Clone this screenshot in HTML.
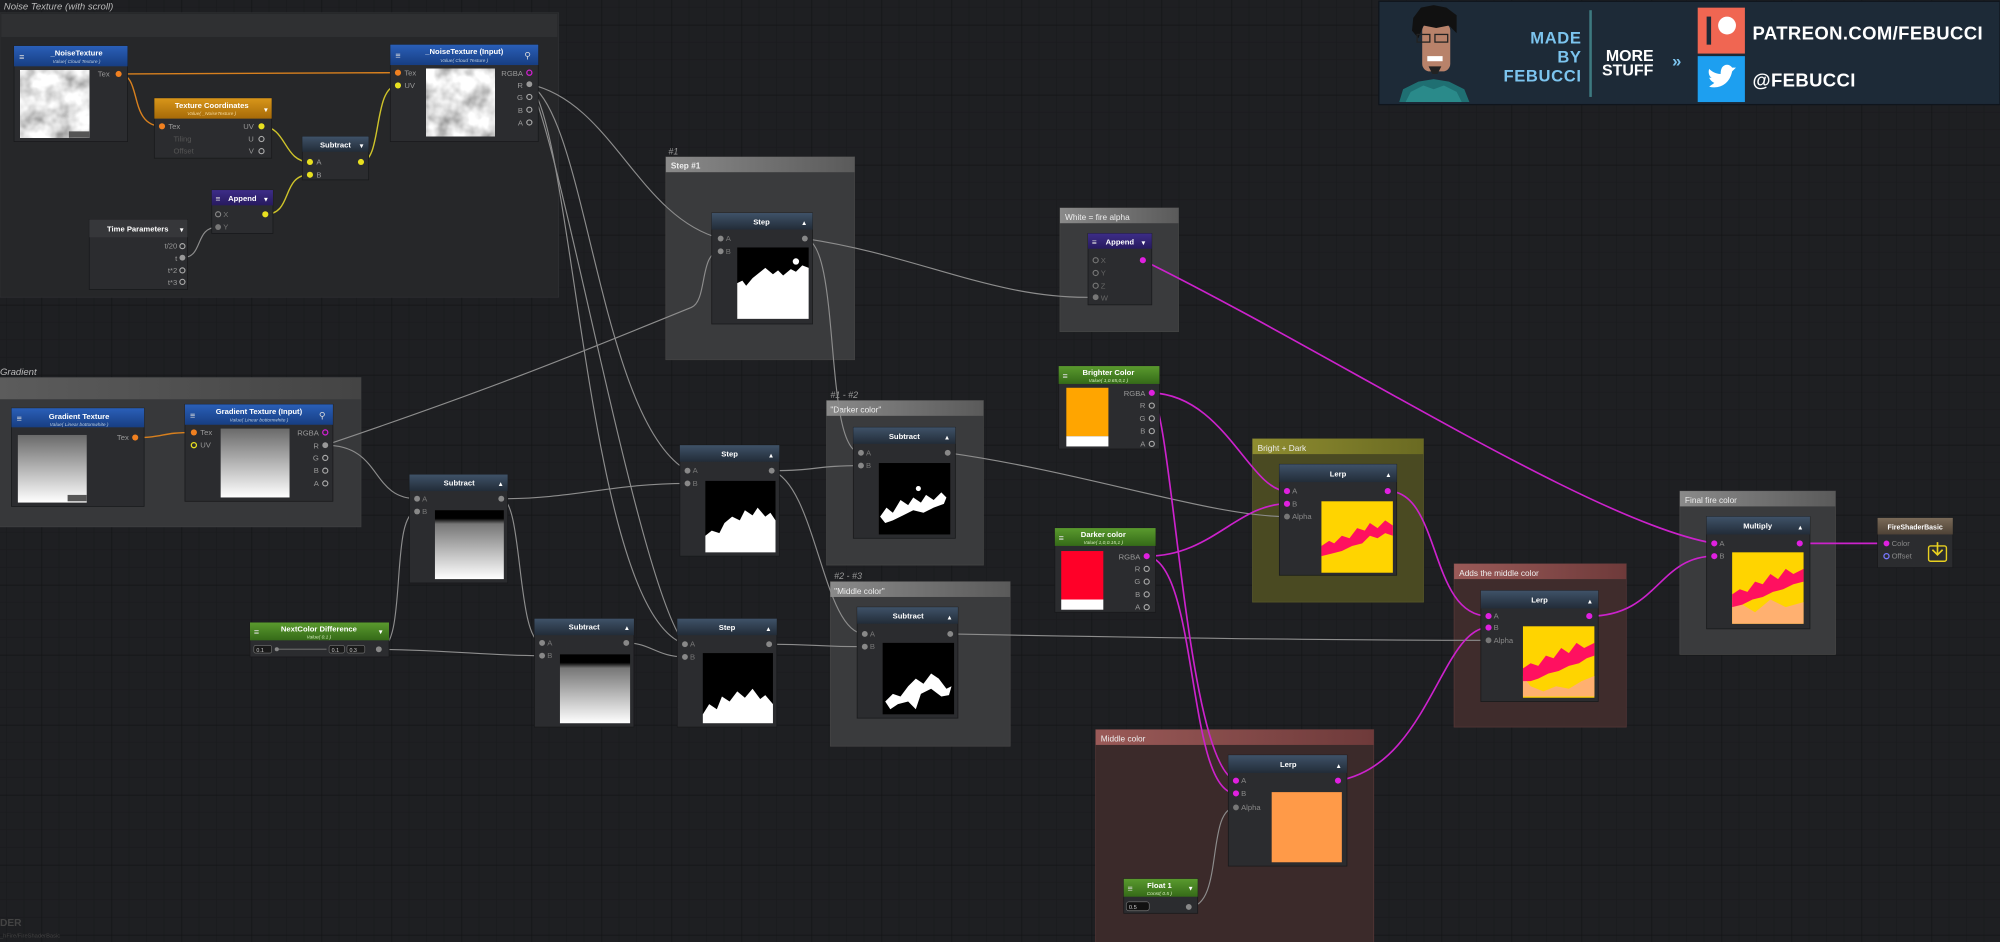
<!DOCTYPE html>
<html><head><meta charset="utf-8"><style>
html,body{margin:0;padding:0;background:#1d1e21;overflow:hidden}
svg{display:block}
text{font-family:"Liberation Sans","DejaVu Sans",sans-serif}
</style></head><body>
<svg width="2000" height="942" viewBox="0 0 1568 738.5" preserveAspectRatio="none" xmlns="http://www.w3.org/2000/svg">
<defs>
<pattern id="grid" x="32.5" y="19.4" width="54.88" height="54.88" patternUnits="userSpaceOnUse">
<rect width="54.88" height="54.88" fill="#1e1f22"/>
<path d="M13.72 0V54.88M27.44 0V54.88M41.16 0V54.88M0 13.72H54.88M0 27.44H54.88M0 41.16H54.88" stroke="#1a1b1d" stroke-width=".6"/>
<path d="M0 0V54.88M0 0H54.88" stroke="#131416" stroke-width="1.1"/>
</pattern>
<linearGradient id="hBlue" x1="0" y1="0" x2="0" y2="1"><stop offset="0" stop-color="#2a5fb8"/><stop offset="1" stop-color="#173e82"/></linearGradient>
<linearGradient id="hOrange" x1="0" y1="0" x2="0" y2="1"><stop offset="0" stop-color="#d8961a"/><stop offset="1" stop-color="#a66a08"/></linearGradient>
<linearGradient id="hOp" x1="0" y1="0" x2="0" y2="1"><stop offset="0" stop-color="#3f5268"/><stop offset="1" stop-color="#222c38"/></linearGradient>
<linearGradient id="hPurple" x1="0" y1="0" x2="0" y2="1"><stop offset="0" stop-color="#3d2d88"/><stop offset="1" stop-color="#271a5e"/></linearGradient>
<linearGradient id="hGreen" x1="0" y1="0" x2="0" y2="1"><stop offset="0" stop-color="#5a9a2e"/><stop offset="1" stop-color="#356a18"/></linearGradient>
<linearGradient id="hBrown" x1="0" y1="0" x2="0" y2="1"><stop offset="0" stop-color="#7a6a58"/><stop offset="1" stop-color="#4e4236"/></linearGradient>
<linearGradient id="gGray" x1="0" y1="0" x2="1" y2="0"><stop offset="0" stop-color="#8a8a8a"/><stop offset="1" stop-color="#5a5a5a"/></linearGradient>
<linearGradient id="gOlive" x1="0" y1="0" x2="1" y2="0"><stop offset="0" stop-color="#8f8d30"/><stop offset="1" stop-color="#6a6a22"/></linearGradient>
<linearGradient id="gRed" x1="0" y1="0" x2="1" y2="0"><stop offset="0" stop-color="#9a5a58"/><stop offset="1" stop-color="#6e3a3a"/></linearGradient>
<linearGradient id="gDark" x1="0" y1="0" x2="1" y2="0"><stop offset="0" stop-color="#5c5c5c"/><stop offset="1" stop-color="#444"/></linearGradient>
<linearGradient id="grad" x1="0" y1="0" x2="0" y2="1"><stop offset="0" stop-color="#6a6a6a"/><stop offset="1" stop-color="#ffffff"/></linearGradient>
<linearGradient id="grad2" x1="0" y1="0" x2="0" y2="1"><stop offset="0" stop-color="#000"/><stop offset=".12" stop-color="#000"/><stop offset=".2" stop-color="#777"/><stop offset="1" stop-color="#fff"/></linearGradient>
<filter id="noise" x="0" y="0" width="100%" height="100%">
<feTurbulence type="fractalNoise" baseFrequency="0.07" numOctaves="3" seed="4"/>
<feColorMatrix type="matrix" values="1.3 0 0 0 0.12  1.3 0 0 0 0.12  1.3 0 0 0 0.12  0 0 0 0 1"/>
</filter>
</defs>

<rect width="1568" height="740" fill="url(#grid)"/>

<!-- Noise group -->
<text x="3" y="7.5" font-size="7.5" font-style="italic" fill="#bbb">Noise Texture (with scroll)</text>
<rect x="0" y="10" width="438" height="223" fill="#262729" stroke="#2f3033" stroke-width=".6"/>
<rect x="1" y="11" width="436" height="18" fill="#2f3032"/>

<!-- Gradient group -->
<text x="0" y="294" font-size="7.5" font-style="italic" fill="#bbb">Gradient</text>
<rect x="-2" y="296" width="285" height="117" fill="#37383a" stroke="#3f4042" stroke-width=".6"/>
<rect x="-2" y="296" width="285" height="17" fill="url(#gDark)"/>

<!-- Step #1 group -->
<text x="524" y="121" font-size="7" font-style="italic" fill="#999">#1</text>
<rect x="522" y="123" width="148" height="159" fill="#3a3b3d" stroke="#444" stroke-width=".6"/>
<rect x="522" y="123" width="148" height="12" fill="url(#gGray)"/>
<text x="526" y="132" font-size="6.5" font-weight="bold" fill="#eee">Step #1</text>

<!-- #1-#2 -->
<text x="651" y="312" font-size="7" font-style="italic" fill="#999">#1 - #2</text>
<rect x="648" y="314" width="123" height="129" fill="#3a3b3d" stroke="#444" stroke-width=".6"/>
<rect x="648" y="314" width="123" height="12" fill="url(#gGray)"/>
<text x="651" y="323.5" font-size="6.5" fill="#eee">"Darker color"</text>

<!-- #2-#3 -->
<text x="654" y="454" font-size="7" font-style="italic" fill="#999">#2 - #3</text>
<rect x="651" y="456" width="141" height="129" fill="#3a3b3d" stroke="#444" stroke-width=".6"/>
<rect x="651" y="456" width="141" height="12" fill="url(#gGray)"/>
<text x="654" y="465.5" font-size="6.5" fill="#eee">"Middle color"</text>

<!-- White fire alpha -->
<rect x="831" y="163" width="93" height="97" fill="#3a3b3d" stroke="#444" stroke-width=".6"/>
<rect x="831" y="163" width="93" height="12" fill="url(#gGray)"/>
<text x="835" y="172.5" font-size="6.5" fill="#eee">White = fire alpha</text>

<!-- Bright + Dark -->
<rect x="982" y="344" width="134" height="128" fill="#4a4a22" stroke="#5a5a2a" stroke-width=".6"/>
<rect x="982" y="344" width="134" height="12" fill="url(#gOlive)"/>
<text x="986" y="353.5" font-size="6.5" fill="#eee">Bright + Dark</text>

<!-- Adds middle -->
<rect x="1140" y="442" width="135" height="128" fill="#3f2c2c" stroke="#553737" stroke-width=".6"/>
<rect x="1140" y="442" width="135" height="12" fill="url(#gRed)"/>
<text x="1144" y="451.5" font-size="6.5" fill="#eee">Adds the middle color</text>

<!-- Final fire color -->
<rect x="1317" y="385" width="122" height="128" fill="#3a3b3d" stroke="#484848" stroke-width=".6"/>
<rect x="1317" y="385" width="122" height="12" fill="url(#gGray)"/>
<text x="1321" y="394.5" font-size="6.5" fill="#eee">Final fire color</text>

<!-- Middle color -->
<rect x="859" y="572" width="218" height="170" fill="#3b2a2a" stroke="#553737" stroke-width=".6"/>
<rect x="859" y="572" width="218" height="12" fill="url(#gRed)"/>
<text x="863" y="581.5" font-size="6.5" fill="#eee">Middle color</text>

<!-- WIRES -->
<g fill="none" stroke-linecap="round">
<g stroke="#d8801e" stroke-width="1.1">
<path d="M93 58 C200 58 250 57 312 57"/>
<path d="M93 58 C112 58 100 99 127 99"/>
<path d="M106 343 C130 343 125 339 152 339"/>
</g>
<g stroke="#cfc42a" stroke-width="1.1">
<path d="M205 99 C225 99 222 127 243 127"/>
<path d="M208 168 C230 168 220 137 243 137"/>
<path d="M283 127 C300 127 292 67 312 67"/>
</g>
<g stroke="#8d8d8d" stroke-width=".9">
<path d="M143 202 C160 202 152 178 171 178"/>
<path d="M415 66 C480 80 500 170 565 187"/>
<path d="M415 66 C460 90 470 330 539 369"/>
<path d="M415 66 C450 100 460 480 537 505"/>
<path d="M415 66 C440 110 500 460 537 505"/>
<path d="M255 349 C400 300 470 270 542 241 C555 236 548 197 565 197"/>
<path d="M255 349 C300 349 290 391 327 391"/>
<path d="M393 391 C450 391 480 379 539 379"/>
<path d="M393 391 C410 391 405 504 425 504"/>
<path d="M297 509 C320 509 305 401 327 401"/>
<path d="M297 509 C360 510 380 514 425 514"/>
<path d="M491 504 C510 504 515 515 537 515"/>
<path d="M631 187 C720 200 780 235 858 233"/>
<path d="M631 187 C660 190 645 355 675 355"/>
<path d="M605 369 C640 369 640 365 675 365"/>
<path d="M605 369 C640 380 645 497 678 497"/>
<path d="M603 505 C640 505 640 507 678 507"/>
<path d="M743 355 C850 370 950 405 1009 405"/>
<path d="M745 497 C900 500 1050 502 1167 502"/>
<path d="M932 711 C960 711 945 633 969 633"/>
</g>
<g stroke="#cc22cc" stroke-width="1.3">
<path d="M896 204 C1050 280 1250 410 1344 426"/>
<path d="M903 308 C960 310 980 385 1009 385"/>
<path d="M903 308 C920 330 930 600 969 612"/>
<path d="M899 436 C950 436 970 395 1009 395"/>
<path d="M899 436 C940 440 930 622 969 622"/>
<path d="M1088 385 C1130 385 1120 483 1167 483"/>
<path d="M1049 612 C1120 600 1130 492 1167 492"/>
<path d="M1246 483 C1300 483 1300 436 1344 436"/>
<path d="M1411 426 L1479 426"/>
</g>
</g>

<!-- NODES -->
<g font-size="6">
<rect x="11" y="36" width="89" height="75" fill="#2b2c2f" stroke="#18191b" stroke-width=".6"/>
<rect x="11" y="36" width="89" height="16" fill="url(#hBlue)"/>
<text x="60" y="43.5" font-size="6" font-weight="bold" fill="#fff" text-anchor="middle">_NoiseTexture</text>
<text x="60" y="49.5" font-size="3.8" font-style="italic" fill="#bcd" text-anchor="middle">Value( Cloud Texture )</text>
<text x="15" y="47" font-size="7" fill="#ddd">≡</text>
<rect x="16" y="55" width="54" height="53" filter="url(#noise)"/>
<rect x="54" y="103" width="16" height="5" fill="#555"/>
<text x="86" y="60" fill="#999" text-anchor="end">Tex</text>
<circle cx="93" cy="58" r="2.4" fill="#f08020"/>

<rect x="121" y="77" width="92" height="47" fill="#2b2c2f" stroke="#18191b" stroke-width=".6"/>
<rect x="121" y="77" width="92" height="16" fill="url(#hOrange)"/>
<text x="166" y="84.5" font-weight="bold" fill="#fff" text-anchor="middle">Texture Coordinates</text>
<text x="166" y="90" font-size="3.8" font-style="italic" fill="#f6dca0" text-anchor="middle">Value( _NoiseTexture )</text>
<text x="206" y="88" fill="#fff" font-size="5">▼</text>
<circle cx="127" cy="99" r="2.4" fill="#f08020"/><text x="132" y="101" fill="#999">Tex</text>
<text x="136" y="111" fill="#555">Tiling</text><text x="136" y="120.5" fill="#555">Offset</text>
<circle cx="205" cy="99" r="2.4" fill="#e8e020"/><text x="199" y="101" fill="#999" text-anchor="end">UV</text>
<circle cx="205" cy="109" r="2" fill="none" stroke="#aaa" stroke-width=".9"/><text x="199" y="111" fill="#999" text-anchor="end">U</text>
<circle cx="205" cy="118.5" r="2" fill="none" stroke="#aaa" stroke-width=".9"/><text x="199" y="120.5" fill="#999" text-anchor="end">V</text>

<rect x="237" y="107" width="52" height="34" fill="#2b2c2f" stroke="#18191b" stroke-width=".6"/>
<rect x="237" y="107" width="52" height="12" fill="url(#hOp)"/>
<text x="263" y="115.5" font-weight="bold" fill="#fff" text-anchor="middle">Subtract</text>
<text x="281" y="116" fill="#fff" font-size="5">▼</text>
<circle cx="243" cy="127" r="2.4" fill="#e8e020"/><text x="248" y="129" fill="#999">A</text>
<circle cx="243" cy="137" r="2.4" fill="#e8e020"/><text x="248" y="139" fill="#999">B</text>
<circle cx="283" cy="127" r="2.4" fill="#e8e020"/>

<rect x="306" y="35" width="116" height="76" fill="#2b2c2f" stroke="#18191b" stroke-width=".6"/>
<rect x="306" y="35" width="116" height="16" fill="url(#hBlue)"/>
<text x="364" y="42.5" font-weight="bold" fill="#fff" text-anchor="middle">_NoiseTexture (Input)</text>
<text x="364" y="48.5" font-size="3.8" font-style="italic" fill="#bcd" text-anchor="middle">Value( Cloud Texture )</text>
<text x="310" y="46" font-size="7" fill="#ddd">≡</text>
<text x="411" y="46" font-size="7" fill="#ddd">⚲</text>
<rect x="334" y="54" width="54" height="53" filter="url(#noise)"/>
<circle cx="312" cy="57" r="2.4" fill="#f08020"/><text x="317" y="59" fill="#999">Tex</text>
<circle cx="312" cy="67" r="2.4" fill="#e8e020"/><text x="317" y="69" fill="#999">UV</text>
<text x="410" y="59.5" fill="#999" text-anchor="end">RGBA</text><circle cx="415" cy="57" r="2" fill="none" stroke="#d020d0" stroke-width="1"/>
<text x="410" y="69" fill="#999" text-anchor="end">R</text><circle cx="415" cy="66" r="2.3" fill="#999"/>
<text x="410" y="78.5" fill="#999" text-anchor="end">G</text><circle cx="415" cy="76" r="2" fill="none" stroke="#aaa" stroke-width=".9"/>
<text x="410" y="88.5" fill="#999" text-anchor="end">B</text><circle cx="415" cy="86" r="2" fill="none" stroke="#aaa" stroke-width=".9"/>
<text x="410" y="98.5" fill="#999" text-anchor="end">A</text><circle cx="415" cy="96" r="2" fill="none" stroke="#aaa" stroke-width=".9"/>

<rect x="166" y="149" width="48" height="34" fill="#2b2c2f" stroke="#18191b" stroke-width=".6"/>
<rect x="166" y="149" width="48" height="12" fill="url(#hPurple)"/>
<text x="169" y="158" font-size="6.5" fill="#ddd">≡</text>
<text x="190" y="157.5" font-weight="bold" fill="#fff" text-anchor="middle">Append</text>
<text x="206" y="158" fill="#fff" font-size="5">▼</text>
<circle cx="171" cy="168" r="2" fill="none" stroke="#888" stroke-width=".9"/><text x="175" y="170" fill="#777">X</text>
<circle cx="171" cy="178" r="2.3" fill="#777"/><text x="175" y="180" fill="#777">Y</text>
<circle cx="208" cy="168" r="2.4" fill="#e8e020"/>

<rect x="70" y="172" width="77" height="55" fill="#2b2c2f" stroke="#18191b" stroke-width=".6"/>
<rect x="70" y="172" width="77" height="14" fill="#36373a"/>
<text x="108" y="181.5" font-weight="bold" fill="#fff" text-anchor="middle">Time Parameters</text>
<text x="140" y="182" fill="#fff" font-size="5">▼</text>
<text x="139" y="195" fill="#999" text-anchor="end">t/20</text><circle cx="143" cy="193" r="2" fill="none" stroke="#aaa" stroke-width=".9"/>
<text x="139" y="204.5" fill="#999" text-anchor="end">t</text><circle cx="143" cy="202" r="2.3" fill="#999"/>
<text x="139" y="214" fill="#999" text-anchor="end">t*2</text><circle cx="143" cy="212" r="2" fill="none" stroke="#aaa" stroke-width=".9"/>
<text x="139" y="223.5" fill="#999" text-anchor="end">t*3</text><circle cx="143" cy="221" r="2" fill="none" stroke="#aaa" stroke-width=".9"/>

<rect x="9" y="320" width="104" height="77" fill="#2b2c2f" stroke="#18191b" stroke-width=".6"/>
<rect x="9" y="320" width="104" height="15" fill="url(#hBlue)"/>
<text x="13" y="330.5" font-size="7" fill="#ddd">≡</text>
<text x="62" y="328.5" font-weight="bold" fill="#fff" text-anchor="middle">Gradient Texture</text>
<text x="62" y="334" font-size="3.8" font-style="italic" fill="#bcd" text-anchor="middle">Value( Linear bottomwhite )</text>
<rect x="14" y="341" width="54" height="53" fill="url(#grad)"/>
<rect x="53" y="388" width="15" height="5" fill="#555"/>
<text x="101" y="345" fill="#999" text-anchor="end">Tex</text><circle cx="106" cy="343" r="2.4" fill="#f08020"/>

<rect x="145" y="317" width="116" height="76" fill="#2b2c2f" stroke="#18191b" stroke-width=".6"/>
<rect x="145" y="317" width="116" height="16" fill="url(#hBlue)"/>
<text x="149" y="328" font-size="7" fill="#ddd">≡</text>
<text x="250" y="328" font-size="7" fill="#ddd">⚲</text>
<text x="203" y="324.5" font-weight="bold" fill="#fff" text-anchor="middle">Gradient Texture (Input)</text>
<text x="203" y="330.5" font-size="3.8" font-style="italic" fill="#bcd" text-anchor="middle">Value( Linear bottomwhite )</text>
<rect x="173" y="336" width="54" height="54" fill="url(#grad)"/>
<circle cx="152" cy="339" r="2.4" fill="#f08020"/><text x="157" y="341" fill="#999">Tex</text>
<circle cx="152" cy="349" r="2" fill="none" stroke="#e8e020" stroke-width="1"/><text x="157" y="351" fill="#999">UV</text>
<text x="250" y="341.5" fill="#999" text-anchor="end">RGBA</text><circle cx="255" cy="339" r="2" fill="none" stroke="#d020d0" stroke-width="1"/>
<text x="250" y="351.5" fill="#999" text-anchor="end">R</text><circle cx="255" cy="349" r="2.3" fill="#999"/>
<text x="250" y="361" fill="#999" text-anchor="end">G</text><circle cx="255" cy="359" r="2" fill="none" stroke="#aaa" stroke-width=".9"/>
<text x="250" y="371" fill="#999" text-anchor="end">B</text><circle cx="255" cy="369" r="2" fill="none" stroke="#aaa" stroke-width=".9"/>
<text x="250" y="381" fill="#999" text-anchor="end">A</text><circle cx="255" cy="379" r="2" fill="none" stroke="#aaa" stroke-width=".9"/>

<rect x="321" y="372" width="77" height="85" fill="#2b2c2f" stroke="#18191b" stroke-width=".6"/>
<rect x="321" y="372" width="77" height="13" fill="url(#hOp)"/>
<text x="360" y="380.5" font-weight="bold" fill="#fff" text-anchor="middle">Subtract</text>
<text x="390" y="381" fill="#fff" font-size="5">▲</text>
<circle cx="327" cy="391" r="2.3" fill="#888"/><text x="331" y="393" fill="#777">A</text>
<circle cx="327" cy="401" r="2.3" fill="#888"/><text x="331" y="403" fill="#777">B</text>
<circle cx="393" cy="391" r="2.3" fill="#888"/>
<rect x="341" y="400" width="54" height="54" fill="url(#grad2)"/>

<rect x="196" y="488" width="109" height="27" fill="#2b2c2f" stroke="#18191b" stroke-width=".6"/>
<rect x="196" y="488" width="109" height="14" fill="url(#hGreen)"/>
<text x="199" y="498" font-size="7" fill="#ddd">≡</text>
<text x="250" y="495" font-weight="bold" fill="#fff" text-anchor="middle">NextColor Difference</text>
<text x="250" y="500.5" font-size="3.8" font-style="italic" fill="#d8f0c0" text-anchor="middle">Value( 0.1 )</text>
<text x="296" y="497" fill="#fff" font-size="5">▼</text>
<rect x="199" y="506" width="14" height="6" rx="1.5" fill="#1a1a1a" stroke="#777" stroke-width=".5"/><text x="201" y="511" font-size="4.2" fill="#ccc">0.1</text>
<line x1="216" y1="509" x2="256" y2="509" stroke="#666" stroke-width="1"/><circle cx="217" cy="509" r="1.6" fill="#888"/>
<rect x="258" y="506" width="12" height="6" rx="1.5" fill="#1a1a1a" stroke="#777" stroke-width=".5"/><text x="260" y="511" font-size="4.2" fill="#ccc">0.1</text>
<rect x="272" y="506" width="14" height="6" rx="1.5" fill="#1a1a1a" stroke="#777" stroke-width=".5"/><text x="274" y="511" font-size="4.2" fill="#ccc">0.3</text>
<circle cx="297" cy="509" r="2.3" fill="#888"/>

<rect x="419" y="485" width="78" height="85" fill="#2b2c2f" stroke="#18191b" stroke-width=".6"/>
<rect x="419" y="485" width="78" height="13" fill="url(#hOp)"/>
<text x="458" y="493.5" font-weight="bold" fill="#fff" text-anchor="middle">Subtract</text>
<text x="489" y="494" fill="#fff" font-size="5">▲</text>
<circle cx="425" cy="504" r="2.3" fill="#888"/><text x="429" y="506" fill="#777">A</text>
<circle cx="425" cy="514" r="2.3" fill="#888"/><text x="429" y="516" fill="#777">B</text>
<circle cx="491" cy="504" r="2.3" fill="#888"/>
<rect x="439" y="513" width="55" height="54" fill="url(#grad2)"/>

<rect x="558" y="167" width="79" height="87" fill="#2b2c2f" stroke="#18191b" stroke-width=".6"/>
<rect x="558" y="167" width="79" height="13" fill="url(#hOp)"/>
<text x="597" y="176" font-weight="bold" fill="#fff" text-anchor="middle">Step</text>
<text x="628" y="176.5" fill="#fff" font-size="5">▲</text>
<circle cx="565" cy="187" r="2.3" fill="#888"/><text x="569" y="189" fill="#777">A</text>
<circle cx="565" cy="197" r="2.3" fill="#888"/><text x="569" y="199" fill="#777">B</text>
<circle cx="631" cy="187" r="2.3" fill="#888"/>
<rect x="578" y="194" width="56" height="56" fill="#000"/>
<path d="M578 222 L582 220 L585 224 L590 218 L595 214 L600 210 L606 215 L610 212 L614 216 L620 211 L624 213 L629 208 L634 210 L634 250 L578 250Z" fill="#fff"/>
<circle cx="624" cy="205" r="2.5" fill="#fff"/>

<rect x="533" y="349" width="78" height="87" fill="#2b2c2f" stroke="#18191b" stroke-width=".6"/>
<rect x="533" y="349" width="78" height="13" fill="url(#hOp)"/>
<text x="572" y="358" font-weight="bold" fill="#fff" text-anchor="middle">Step</text>
<text x="602" y="358.5" fill="#fff" font-size="5">▲</text>
<circle cx="539" cy="369" r="2.3" fill="#888"/><text x="543" y="371" fill="#777">A</text>
<circle cx="539" cy="379" r="2.3" fill="#888"/><text x="543" y="381" fill="#777">B</text>
<circle cx="605" cy="369" r="2.3" fill="#888"/>
<rect x="553" y="377" width="55" height="56" fill="#000"/>
<path d="M553 420 L558 416 L564 418 L568 410 L574 405 L580 408 L584 400 L590 404 L594 398 L600 405 L604 402 L608 408 L608 433 L553 433Z" fill="#fff"/>

<rect x="531" y="485" width="78" height="85" fill="#2b2c2f" stroke="#18191b" stroke-width=".6"/>
<rect x="531" y="485" width="78" height="13" fill="url(#hOp)"/>
<text x="570" y="494" font-weight="bold" fill="#fff" text-anchor="middle">Step</text>
<text x="600" y="494.5" fill="#fff" font-size="5">▲</text>
<circle cx="537" cy="505" r="2.3" fill="#888"/><text x="541" y="507" fill="#777">A</text>
<circle cx="537" cy="515" r="2.3" fill="#888"/><text x="541" y="517" fill="#777">B</text>
<circle cx="603" cy="505" r="2.3" fill="#888"/>
<rect x="551" y="512" width="55" height="55" fill="#000"/>
<path d="M551 560 L556 552 L562 556 L566 546 L572 550 L578 542 L584 547 L590 540 L596 548 L600 545 L606 552 L606 567 L551 567Z" fill="#fff"/>

<rect x="669" y="335" width="80" height="87" fill="#2b2c2f" stroke="#18191b" stroke-width=".6"/>
<rect x="669" y="335" width="80" height="13" fill="url(#hOp)"/>
<text x="709" y="344" font-weight="bold" fill="#fff" text-anchor="middle">Subtract</text>
<text x="740" y="344.5" fill="#fff" font-size="5">▲</text>
<circle cx="675" cy="355" r="2.3" fill="#888"/><text x="679" y="357" fill="#777">A</text>
<circle cx="675" cy="365" r="2.3" fill="#888"/><text x="679" y="367" fill="#777">B</text>
<circle cx="743" cy="355" r="2.3" fill="#888"/>
<rect x="689" y="363" width="56" height="56" fill="#000"/>
<path d="M690 405 L695 398 L700 402 L706 392 L712 396 L716 390 L722 394 L726 388 L732 392 L738 386 L742 390 L740 395 L732 398 L724 402 L716 400 L708 404 L700 408 L694 410Z" fill="#fff"/>
<circle cx="720" cy="383" r="2" fill="#fff"/>

<rect x="672" y="476" width="79" height="87" fill="#2b2c2f" stroke="#18191b" stroke-width=".6"/>
<rect x="672" y="476" width="79" height="13" fill="url(#hOp)"/>
<text x="712" y="485" font-weight="bold" fill="#fff" text-anchor="middle">Subtract</text>
<text x="742" y="485.5" fill="#fff" font-size="5">▲</text>
<circle cx="678" cy="497" r="2.3" fill="#888"/><text x="682" y="499" fill="#777">A</text>
<circle cx="678" cy="507" r="2.3" fill="#888"/><text x="682" y="509" fill="#777">B</text>
<circle cx="745" cy="497" r="2.3" fill="#888"/>
<rect x="692" y="504" width="56" height="56" fill="#000"/>
<path d="M694 550 L700 544 L706 546 L712 538 L718 532 L724 536 L730 528 L736 532 L742 540 L746 538 L744 545 L738 546 L730 540 L722 544 L718 556 L712 550 L704 552 L698 556Z" fill="#fff"/>

<rect x="853" y="183" width="50" height="56" fill="#2b2c2f" stroke="#18191b" stroke-width=".6"/>
<rect x="853" y="183" width="50" height="12" fill="url(#hPurple)"/>
<text x="856" y="192" font-size="6.5" fill="#ddd">≡</text>
<text x="878" y="191.5" font-weight="bold" fill="#fff" text-anchor="middle">Append</text>
<text x="894" y="192" fill="#fff" font-size="5">▼</text>
<circle cx="859" cy="204" r="2" fill="none" stroke="#777" stroke-width=".9"/><text x="863" y="206" fill="#666">X</text>
<circle cx="859" cy="214" r="2" fill="none" stroke="#777" stroke-width=".9"/><text x="863" y="216" fill="#666">Y</text>
<circle cx="859" cy="224" r="2" fill="none" stroke="#777" stroke-width=".9"/><text x="863" y="226" fill="#666">Z</text>
<circle cx="859" cy="233" r="2.3" fill="#777"/><text x="863" y="235.5" fill="#666">W</text>
<circle cx="896" cy="204" r="2.4" fill="#e020e0"/>

<rect x="830" y="287" width="79" height="65" fill="#2b2c2f" stroke="#18191b" stroke-width=".6"/>
<rect x="830" y="287" width="79" height="14" fill="url(#hGreen)"/>
<text x="833" y="297" font-size="7" fill="#ddd">≡</text>
<text x="869" y="294" font-weight="bold" fill="#fff" text-anchor="middle">Brighter Color</text>
<text x="869" y="299.5" font-size="3.8" font-style="italic" fill="#d8f0c0" text-anchor="middle">Value( 1,0.65,0,1 )</text>
<rect x="836" y="304" width="33" height="38" fill="#ffa500"/><rect x="836" y="342" width="33" height="8" fill="#fff"/>
<text x="898" y="310.5" fill="#999" text-anchor="end">RGBA</text><circle cx="903" cy="308" r="2.4" fill="#e020e0"/>
<text x="898" y="320" fill="#999" text-anchor="end">R</text><circle cx="903" cy="318" r="2" fill="none" stroke="#aaa" stroke-width=".9"/>
<text x="898" y="330" fill="#999" text-anchor="end">G</text><circle cx="903" cy="328" r="2" fill="none" stroke="#aaa" stroke-width=".9"/>
<text x="898" y="340" fill="#999" text-anchor="end">B</text><circle cx="903" cy="338" r="2" fill="none" stroke="#aaa" stroke-width=".9"/>
<text x="898" y="350" fill="#999" text-anchor="end">A</text><circle cx="903" cy="348" r="2" fill="none" stroke="#aaa" stroke-width=".9"/>

<rect x="827" y="414" width="79" height="66" fill="#2b2c2f" stroke="#18191b" stroke-width=".6"/>
<rect x="827" y="414" width="79" height="14" fill="url(#hGreen)"/>
<text x="830" y="424" font-size="7" fill="#ddd">≡</text>
<text x="865" y="421" font-weight="bold" fill="#fff" text-anchor="middle">Darker color</text>
<text x="865" y="426.5" font-size="3.8" font-style="italic" fill="#d8f0c0" text-anchor="middle">Value( 1,0,0.15,1 )</text>
<rect x="832" y="432" width="33" height="38" fill="#ff0028"/><rect x="832" y="470" width="33" height="8" fill="#fff"/>
<text x="894" y="438.5" fill="#999" text-anchor="end">RGBA</text><circle cx="899" cy="436" r="2.4" fill="#e020e0"/>
<text x="894" y="448" fill="#999" text-anchor="end">R</text><circle cx="899" cy="446" r="2" fill="none" stroke="#aaa" stroke-width=".9"/>
<text x="894" y="458" fill="#999" text-anchor="end">G</text><circle cx="899" cy="456" r="2" fill="none" stroke="#aaa" stroke-width=".9"/>
<text x="894" y="468" fill="#999" text-anchor="end">B</text><circle cx="899" cy="466" r="2" fill="none" stroke="#aaa" stroke-width=".9"/>
<text x="894" y="478" fill="#999" text-anchor="end">A</text><circle cx="899" cy="476" r="2" fill="none" stroke="#aaa" stroke-width=".9"/>

<rect x="1003" y="364" width="92" height="87" fill="#2b2c2f" stroke="#18191b" stroke-width=".6"/>
<rect x="1003" y="364" width="92" height="14" fill="url(#hOp)"/>
<text x="1049" y="373.5" font-weight="bold" fill="#fff" text-anchor="middle">Lerp</text>
<text x="1086" y="374" fill="#fff" font-size="5">▲</text>
<circle cx="1009" cy="385" r="2.4" fill="#e020e0"/><text x="1013" y="387" fill="#888">A</text>
<circle cx="1009" cy="395" r="2.4" fill="#e020e0"/><text x="1013" y="397" fill="#888">B</text>
<circle cx="1009" cy="405" r="2.3" fill="#777"/><text x="1013" y="407" fill="#888">Alpha</text>
<circle cx="1088" cy="385" r="2.4" fill="#e020e0"/>
<rect x="1036" y="393" width="56" height="56" fill="#ffd400"/>
<path d="M1036 428 L1042 424 L1046 426 L1052 420 L1058 422 L1064 414 L1070 416 L1074 410 L1080 414 L1086 408 L1092 412 L1092 420 L1086 418 L1080 422 L1074 420 L1068 426 L1060 428 L1052 432 L1044 434 L1036 436Z" fill="#ff1060"/>

<rect x="1161" y="463" width="92" height="87" fill="#2b2c2f" stroke="#18191b" stroke-width=".6"/>
<rect x="1161" y="463" width="92" height="14" fill="url(#hOp)"/>
<text x="1207" y="472.5" font-weight="bold" fill="#fff" text-anchor="middle">Lerp</text>
<text x="1244" y="473" fill="#fff" font-size="5">▲</text>
<circle cx="1167" cy="483" r="2.4" fill="#e020e0"/><text x="1171" y="485" fill="#888">A</text>
<circle cx="1167" cy="492" r="2.4" fill="#e020e0"/><text x="1171" y="494" fill="#888">B</text>
<circle cx="1167" cy="502" r="2.3" fill="#777"/><text x="1171" y="504" fill="#888">Alpha</text>
<circle cx="1246" cy="483" r="2.4" fill="#e020e0"/>
<rect x="1194" y="491" width="56" height="56" fill="#ffd400"/>
<path d="M1194 530 L1194 546 L1250 546 L1250 530 L1240 534 L1230 540 L1220 538 L1210 542 L1200 538Z" fill="#ffb070"/>
<path d="M1194 524 L1200 520 L1206 522 L1212 514 L1218 516 L1224 508 L1230 512 L1236 504 L1242 508 L1250 504 L1250 514 L1244 516 L1238 520 L1230 522 L1222 526 L1214 528 L1206 532 L1200 534 L1194 534Z" fill="#ff1060"/>

<rect x="1338" y="405" width="81" height="88" fill="#2b2c2f" stroke="#18191b" stroke-width=".6"/>
<rect x="1338" y="405" width="81" height="14" fill="url(#hOp)"/>
<text x="1378" y="414.5" font-weight="bold" fill="#fff" text-anchor="middle">Multiply</text>
<text x="1409" y="415" fill="#fff" font-size="5">▲</text>
<circle cx="1344" cy="426" r="2.4" fill="#e020e0"/><text x="1348" y="428" fill="#888">A</text>
<circle cx="1344" cy="436" r="2.4" fill="#e020e0"/><text x="1348" y="438" fill="#888">B</text>
<circle cx="1411" cy="426" r="2.4" fill="#e020e0"/>
<rect x="1358" y="433" width="56" height="56" fill="#ffd400"/>
<path d="M1358 470 L1358 489 L1414 489 L1414 472 L1400 476 L1388 470 L1376 480 L1366 474Z" fill="#ffb070"/>
<path d="M1358 466 L1364 462 L1370 464 L1376 456 L1382 458 L1388 450 L1394 454 L1400 446 L1406 450 L1414 446 L1414 456 L1406 458 L1398 462 L1390 464 L1382 468 L1374 470 L1366 474 L1358 476Z" fill="#ff1060"/>

<rect x="1472" y="406" width="59" height="39" fill="#2b2c2f" stroke="#18191b" stroke-width=".6"/>
<rect x="1472" y="406" width="59" height="13" fill="url(#hBrown)"/>
<text x="1501.5" y="415" font-weight="bold" fill="#fff" text-anchor="middle" font-size="5.5">FireShaderBasic</text>
<circle cx="1479" cy="426" r="2.3" fill="#e020e0"/><text x="1483" y="428" fill="#888">Color</text>
<circle cx="1479" cy="436" r="2" fill="none" stroke="#7777ff" stroke-width="1"/><text x="1483" y="438" fill="#888">Offset</text>
<rect x="1512" y="428" width="14" height="12" rx="1.5" fill="none" stroke="#e8d020" stroke-width="1.1"/>
<path d="M1519 425 V435 M1515 431 L1519 435 L1523 431" stroke="#e8d020" stroke-width="1.3" fill="none"/>

<rect x="963" y="592" width="93" height="87" fill="#2b2c2f" stroke="#18191b" stroke-width=".6"/>
<rect x="963" y="592" width="93" height="14" fill="url(#hOp)"/>
<text x="1010" y="601.5" font-weight="bold" fill="#fff" text-anchor="middle">Lerp</text>
<text x="1047" y="602" fill="#fff" font-size="5">▲</text>
<circle cx="969" cy="612" r="2.4" fill="#e020e0"/><text x="973" y="614" fill="#888">A</text>
<circle cx="969" cy="622" r="2.4" fill="#e020e0"/><text x="973" y="624" fill="#888">B</text>
<circle cx="969" cy="633" r="2.3" fill="#777"/><text x="973" y="635" fill="#888">Alpha</text>
<circle cx="1049" cy="612" r="2.4" fill="#e020e0"/>
<rect x="997" y="621" width="55" height="55" fill="#ff9a48"/>

<rect x="881" y="689" width="58" height="27" fill="#2b2c2f" stroke="#18191b" stroke-width=".6"/>
<rect x="881" y="689" width="58" height="14" fill="url(#hGreen)"/>
<text x="884" y="699" font-size="7" fill="#ddd">≡</text>
<text x="909" y="696" font-weight="bold" fill="#fff" text-anchor="middle">Float 1</text>
<text x="909" y="701.5" font-size="3.8" font-style="italic" fill="#d8f0c0" text-anchor="middle">Const( 0.5 )</text>
<text x="931" y="698" fill="#fff" font-size="5">▼</text>
<rect x="883" y="707" width="18" height="7" rx="2" fill="#111" stroke="#777" stroke-width=".5"/><text x="885" y="712.5" font-size="4.5" fill="#ccc">0.5</text>
<circle cx="932" cy="711" r="2.3" fill="#888"/>
</g>

<text x="0" y="726" font-size="8" fill="#444" font-weight="bold">DER</text>
<text x="0" y="735" font-size="4.5" fill="#444">_hFire/FireShaderBasic</text>

<!-- Banner -->
<rect x="1081" y="1" width="487" height="81" fill="#1d2a37" stroke="#0f151c" stroke-width="1"/>
<g>
<path d="M1097 80 L1100 70 L1112 64 L1124 62 L1136 64 L1148 70 L1152 80Z" fill="#1f6f72"/>
<path d="M1102 80 L1106 72 L1116 67 L1124 70 L1132 67 L1142 72 L1146 80Z" fill="#2a8a8a"/>
<rect x="1115" y="18" width="22" height="38" rx="6" fill="#b8826a"/>
<path d="M1108 14 L1114 6 L1124 4 L1134 6 L1142 12 L1142 26 L1136 20 L1126 22 L1116 20 L1112 30 L1107 24Z" fill="#111"/>
<rect x="1111" y="27" width="10" height="6" fill="none" stroke="#222" stroke-width="1"/>
<rect x="1125" y="27" width="10" height="6" fill="none" stroke="#222" stroke-width="1"/>
<rect x="1119" y="44" width="12" height="4" fill="#fff"/>
<path d="M1120 52 L1130 52 L1127 58 L1123 58Z" fill="#222"/>
</g>
<g font-family="'DejaVu Sans Mono','Liberation Mono',monospace" font-weight="bold">
<text x="1240" y="34" font-size="13" letter-spacing="0.5" fill="#7cc4ee" text-anchor="end">MADE</text>
<text x="1240" y="49" font-size="13" letter-spacing="0.5" fill="#7cc4ee" text-anchor="end">BY</text>
<text x="1240" y="64" font-size="13" letter-spacing="0.5" fill="#7cc4ee" text-anchor="end">FEBUCCI</text>
<text x="1259" y="48" font-size="12.5" fill="#fff">MORE</text>
<text x="1256" y="59" font-size="12.5" fill="#fff">STUFF</text>
<text x="1311" y="52" font-size="13" fill="#7cc4ee">»</text>
<text x="1374" y="31" font-size="14.5" letter-spacing="0.3" fill="#fff">PATREON.COM/FEBUCCI</text>
<text x="1374" y="68" font-size="14.5" letter-spacing="0.3" fill="#fff">@FEBUCCI</text>
</g>
<rect x="1246" y="8" width="2" height="68" fill="#3d7a80"/>
<rect x="1331" y="6" width="37" height="36" fill="#f06652"/>
<rect x="1338" y="13" width="3.5" height="22" fill="#1d2a37"/>
<circle cx="1354" cy="20" r="7" fill="#fff"/>
<rect x="1331" y="44" width="37" height="36" fill="#1d9ff0"/>
<path d="M1340 68 C1348 70 1356 66 1358 56 L1361 53 L1358 53 C1356 50 1352 50 1350 53 C1349 55 1349 57 1349 58 C1345 58 1342 56 1340 54 C1339 57 1340 60 1342 61 L1340 61 C1341 63 1342 64 1344 65 C1343 66 1341 67 1340 68Z" fill="#fff"/>
</svg>
</body></html>
